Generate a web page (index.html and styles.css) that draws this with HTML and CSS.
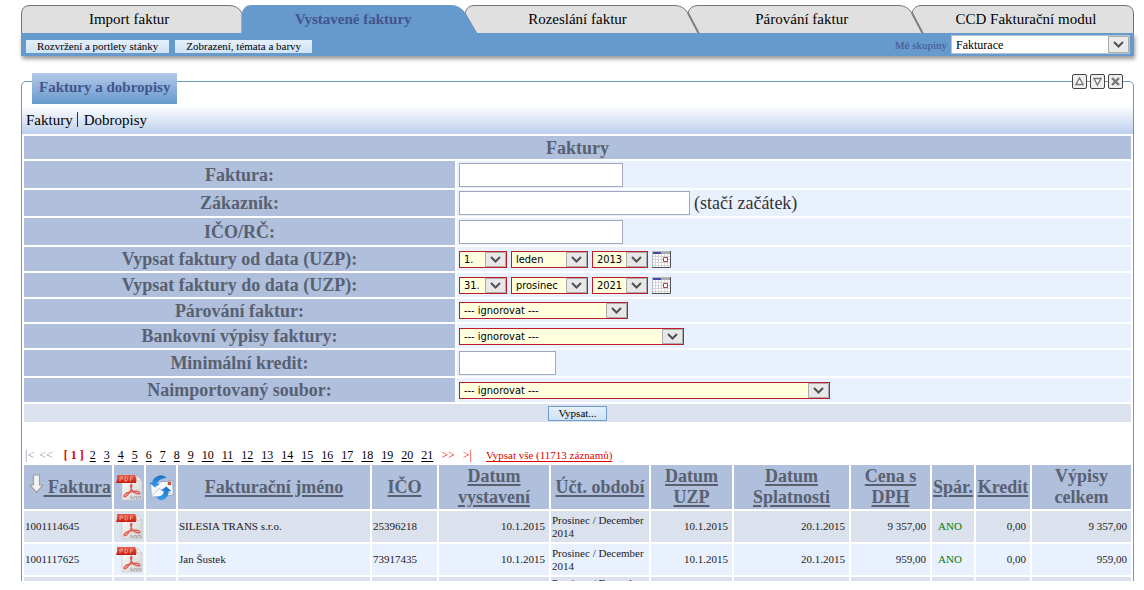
FILE: index.html
```html
<!DOCTYPE html>
<html lang="cs">
<head>
<meta charset="utf-8">
<title>Fakturace – vystavené faktury</title>
<link rel="stylesheet" href="styles.css">
</head>
<body>
<svg class="defs" aria-hidden="true">
  <defs>
    <linearGradient id="g-red" x1="0" y1="0" x2="0" y2="1"><stop offset="0" stop-color="#e8604c"/><stop offset="1" stop-color="#c81c10"/></linearGradient>
    <linearGradient id="g-page" x1="0" y1="0" x2="1" y2="1"><stop offset="0" stop-color="#ffffff"/><stop offset="1" stop-color="#cfcfcf"/></linearGradient>
    <linearGradient id="g-blue" x1="0" y1="0" x2="0" y2="1"><stop offset="0" stop-color="#1d6fc4"/><stop offset="1" stop-color="#35a0ec"/></linearGradient>
  </defs>
  <symbol id="pdf" viewBox="0 0 27 27">
    <path d="M6 2H21L26 7V26H6Z" fill="url(#g-page)" stroke="#c4c4c4" stroke-width=".6"/>
    <path d="M21 2V7H26Z" fill="#f6f6f6" stroke="#bbbbbb" stroke-width=".6"/>
    <path d="M1 1H19Q21 4 20 9H0Q2 5 1 1Z" fill="url(#g-red)"/>
    <path d="M4 7V3H6.500V5H4M9 3V7H10.500L12 5L10.500 3ZM14.500 7V3H17M14.500 5H16.500" fill="none" stroke="#f09a8c"/>
    <path d="M15 10Q14 14 17 17.500Q20 20.500 24 19.500M15.500 10Q17 15 11.500 21Q8.500 24 8 22Q9 18.500 17 17.500Q24 16.500 24 19.500" fill="none" stroke="#dc5a50" stroke-width="1.300"/>
    <path d="M15 25V21.500M15 23H17V25M18.500 25V22.500H20.500V25M22 25V22.500H24.500V25" fill="none" stroke="#a2a2a2" stroke-width=".8"/>
  </symbol>
  <symbol id="mail" viewBox="0 0 27 28">
    <path d="M2 9L25 7L26 22L3 24Z" fill="#f5f8fc" stroke="#8f9fba" stroke-width=".9"/>
    <path d="M3 23L11 15L16 17L25 21" fill="none" stroke="#b4c0d2"/>
    <path d="M20 8H23.500V11.500H20Z" fill="#c8552f"/>
    <path d="M19 4Q14 -1 8 3Q4 5 4 9L1 9L6.500 14L12 10L9 9.500Q11 5 19 4Z" fill="url(#g-blue)"/>
    <path d="M8 24Q12 29 17 26Q21 23 21 18L24 18L18.500 13L13 17L16 18Q15 24 8 24Z" fill="url(#g-blue)"/>
  </symbol>
  <symbol id="calendar" viewBox="0 0 19 17">
    <path d="M0 0H19V17H0Z" fill="#ffffff"/>
    <path d="M0 5.500H18M0 8.500H18M0 11.500H18M0 14.500H18M3.500 3V16M6.500 3V16M9.500 3V16M12.500 3V16M15.500 3V16" stroke="#d5d5d5"/>
    <path d="M0 .5H18M.5 0V16" stroke="#b8b8b8"/>
    <path d="M1 1H9V3H1Z" fill="#4448a8"/>
    <path d="M9 1H18V3H9Z" fill="#a8a8b0"/>
    <path d="M18.500 0V16.500H0" fill="none" stroke="#505058"/>
    <path d="M11.500 6.500H15.500V10.500H11.500Z" fill="#fff" stroke="#b43c3c"/>
  </symbol>
</svg>

<div class="page">
  <header class="top">
    <nav class="tabs">
      <svg class="tab-shapes" viewBox="0 0 1113 28" preserveAspectRatio="none" aria-hidden="true">
        <g fill="#e0e0e0" stroke="#747474">
          <path d="M891 8Q893 .5 900 .5H1104Q1112.500 .5 1112.500 9V29H902Z"/>
          <path d="M667 8Q669 .5 677 .5H878Q886 .5 891 8L902 29H678Z"/>
          <path d="M444 8Q446 .5 453 .5H654Q662 .5 667 8L678 29H456Z"/>
          <path d="M.5 29V9Q.5 .5 9 .5H208Q217 .5 221 8V29Z"/>
        </g>
        <path d="M667 8L678 29M891 8L902 29" stroke="#808080" stroke-width="2" fill="none"/>
        <path d="M221 28V8Q223 0 230 0H430Q439 0 444 8L456 28Z" fill="#6699cc"/>
      </svg>
      <a class="tab" href="#">Import faktur</a>
      <a class="tab tab-active" href="#">Vystavené faktury</a>
      <a class="tab" href="#">Rozeslání faktur</a>
      <a class="tab" href="#">Párování faktur</a>
      <a class="tab" href="#">CCD Fakturační modul</a>
    </nav>
    <div class="toolbar">
      <button class="tool" type="button">Rozvržení a portlety stánky</button>
      <button class="tool" type="button">Zobrazení, témata a barvy</button>
      <label class="group-label" for="group">Mé skupiny</label>
      <select class="group" id="group"><option>Fakturace</option></select>
    </div>
  </header>

  <main class="portlet">
    <div class="portlet-head">
      <h1 class="portlet-title">Faktury a dobropisy</h1>
      <div class="window-buttons">
        <button class="window-button" type="button" aria-label="Nahoru"><svg viewBox="0 0 15 15"><rect x=".5" y=".5" width="14" height="14" rx="1.500" fill="#efefef" stroke="#444"/><path d="M7.500 4L11 10.500H4Z" fill="#fff" stroke="#777" stroke-width="1.400"/></svg></button>
        <button class="window-button" type="button" aria-label="Dolů"><svg viewBox="0 0 15 15"><rect x=".5" y=".5" width="14" height="14" rx="1.500" fill="#efefef" stroke="#444"/><path d="M7.500 11L11 4.500H4Z" fill="#fff" stroke="#777" stroke-width="1.400"/></svg></button>
        <button class="window-button" type="button" aria-label="Zavřít"><svg viewBox="0 0 15 15"><rect x=".5" y=".5" width="14" height="14" rx="1.500" fill="#efefef" stroke="#444"/><path d="M4 4L11 11M11 4L4 11" stroke="#777" stroke-width="2.400"/></svg></button>
      </div>
    </div>
    <nav class="subnav">
      <a href="#">Faktury</a>
      <a href="#">Dobropisy</a>
    </nav>

    <form>
      <table class="filter">
        <colgroup><col class="filter-label"><col></colgroup>
        <tr><th colspan="2">Faktury</th></tr>
        <tr class="tall"><th><label for="invoice">Faktura:</label></th><td><div class="field"><input class="w-m" id="invoice" type="text"></div></td></tr>
        <tr class="mid"><th><label for="customer">Zákazník:</label></th><td><div class="field"><input class="w-l" id="customer" type="text"> (stačí začátek)</div></td></tr>
        <tr class="tall"><th><label for="ico">IČO/RČ:</label></th><td><div class="field"><input class="w-m" id="ico" type="text"></div></td></tr>
        <tr class="date"><th><label for="from-day">Vypsat faktury od data (UZP):</label></th><td><div class="field">
          <select class="pick w-day" id="from-day"><option>1.</option></select>
          <select class="pick w-month" aria-label="Měsíc od"><option>leden</option></select>
          <select class="pick w-year" aria-label="Rok od"><option>2013</option></select>
          <button class="calendar" type="button" aria-label="Kalendář od"><svg><use href="#calendar"/></svg></button></div></td></tr>
        <tr class="date"><th><label for="to-day">Vypsat faktury do data (UZP):</label></th><td><div class="field">
          <select class="pick w-day" id="to-day"><option>31.</option></select>
          <select class="pick w-month" aria-label="Měsíc do"><option>prosinec</option></select>
          <select class="pick w-year" aria-label="Rok do"><option>2021</option></select>
          <button class="calendar" type="button" aria-label="Kalendář do"><svg><use href="#calendar"/></svg></button></div></td></tr>
        <tr><th><label for="pairing">Párování faktur:</label></th><td><div class="field"><select class="pick w-pair" id="pairing"><option>--- ignorovat ---</option></select></div></td></tr>
        <tr class="date"><th><label for="bank">Bankovní výpisy faktury:</label></th><td><div class="field"><select class="pick w-bank" id="bank"><option>--- ignorovat ---</option></select></div></td></tr>
        <tr class="mid"><th><label for="credit">Minimální kredit:</label></th><td><div class="field"><input class="w-s" id="credit" type="text"></div></td></tr>
        <tr class="date"><th><label for="file">Naimportovaný soubor:</label></th><td><div class="field"><select class="pick w-file" id="file"><option>--- ignorovat ---</option></select></div></td></tr>
        <tr class="submit-row"><td colspan="2"><button class="submit" type="submit">Vypsat...</button></td></tr>
      </table>
    </form>

    <nav class="pager">
      <span class="off">|&lt;</span><span class="off prev">&lt;&lt;</span><b>[ 1 ]</b>
      <a href="#">2</a><a href="#">3</a><a href="#">4</a><a href="#">5</a><a href="#">6</a><a href="#">7</a><a href="#">8</a><a href="#">9</a><a href="#">10</a><a href="#">11</a><a href="#">12</a><a href="#">13</a><a href="#">14</a><a href="#">15</a><a href="#">16</a><a href="#">17</a><a href="#">18</a><a href="#">19</a><a href="#">20</a><a href="#">21</a>
      <a class="step" href="#">&gt;&gt;</a><a class="step" href="#">&gt;|</a><a class="all" href="#">Vypsat vše (11713 záznamů)</a>
    </nav>

    <table class="list">
      <colgroup><col class="c-no"><col class="c-icon"><col class="c-icon"><col><col class="c-ico"><col class="c-issued"><col class="c-period"><col class="c-uzp"><col class="c-due"><col class="c-price"><col class="c-pair"><col class="c-credit"><col class="c-total"></colgroup>
      <thead>
        <tr>
          <th><a class="sorted" href="#"><svg class="sort-arrow" viewBox="0 0 15 20" aria-hidden="true"><path d="M4.500 1H10.500V11H14L7.500 18.500L1 11H4.500Z" fill="#f4f4f4" stroke="#a0a0a0" stroke-width="1.200"/></svg><span>&nbsp;Faktura</span></a></th>
          <th><svg class="icon"><use href="#pdf"/></svg></th>
          <th><svg class="icon"><use href="#mail"/></svg></th>
          <th><a href="#">Fakturační jméno</a></th>
          <th><a href="#">IČO</a></th>
          <th><a href="#">Datum vystavení</a></th>
          <th><a href="#">Účt. období</a></th>
          <th><a href="#">Datum UZP</a></th>
          <th><a href="#">Datum Splatnosti</a></th>
          <th><a href="#">Cena s DPH</a></th>
          <th><a href="#">Spár.</a></th>
          <th><a href="#">Kredit</a></th>
          <th>Výpisy celkem</th>
        </tr>
      </thead>
      <tbody>
        <tr><td>1001114645</td><td><a href="#" aria-label="PDF"><svg class="icon"><use href="#pdf"/></svg></a></td><td></td><td>SILESIA TRANS s.r.o.</td><td>25396218</td><td class="num">10.1.2015</td><td>Prosinec / December 2014</td><td class="num">10.1.2015</td><td class="num">20.1.2015</td><td class="num">9 357,00</td><td class="yes">ANO</td><td class="num">0,00</td><td class="num">9 357,00</td></tr>
        <tr><td>1001117625</td><td><a href="#" aria-label="PDF"><svg class="icon"><use href="#pdf"/></svg></a></td><td></td><td>Jan Šustek</td><td>73917435</td><td class="num">10.1.2015</td><td>Prosinec / December 2014</td><td class="num">10.1.2015</td><td class="num">20.1.2015</td><td class="num">959,00</td><td class="yes">ANO</td><td class="num">0,00</td><td class="num">959,00</td></tr>
        <tr class="compact"><td></td><td></td><td></td><td></td><td></td><td></td><td>Prosinec / December 2014</td><td></td><td></td><td></td><td></td><td></td><td></td></tr>
      </tbody>
    </table>
  </main>
</div>
</body>
</html>
```
FILE: styles.css
```css
* { box-sizing: border-box; }

body {
  margin: 0;
  background: #fff;
  color: #333;
  font-family: "Liberation Serif", "Times New Roman", serif;
  font-size: 15px;
}

button, input, select { margin: 0; font-family: inherit; }
.defs { position: absolute; width: 0; height: 0; }

.page {
  height: calc(100vh - 9px);
  overflow: hidden;
  padding: 5px 10px 0 21px;
}

/* Top tabs and toolbar */
.tabs {
  position: relative;
  display: flex;
  height: 28px;
}
.tab-shapes {
  position: absolute;
  inset: 0;
  width: 100%;
  height: 100%;
}
.tab {
  position: relative;
  flex: 1;
  color: #000;
  line-height: 28px;
  text-align: center;
  text-decoration: none;
}
.tab:nth-of-type(1) { padding-right: 8px; }
.tab:nth-of-type(2) { padding-right: 8px; }
.tab:nth-of-type(4) { padding-left: 8px; }
.tab:nth-of-type(5) { padding-left: 8px; }
.tab-active { color: #44548c; font-weight: bold; }

.toolbar {
  display: flex;
  align-items: center;
  gap: 6px;
  height: 23px;
  padding: 0 4px 0 5px;
  background: #6699cc;
  box-shadow: 1px 3px 4px #999;
}
.tool {
  height: 13px;
  margin-top: 4px;
  padding: 0 11px;
  border: 0;
  background: linear-gradient(#e4effb, #cfe2f6);
  color: #000;
  font-size: 11px;
  line-height: 13px;
}
.group-label { margin-left: auto; color: #44548c; font-size: 11px; }
.group {
  width: 179px;
  height: 19px;
  margin-left: -2px;
  padding: 0 0 0 4px;
  border: 1px solid #b4c4d8;
  border-radius: 0;
  appearance: none;
  color: #000;
  font-size: 12px;
  background: #fff url("data:image/svg+xml,%3Csvg xmlns='http://www.w3.org/2000/svg' width='21' height='17'%3E%3Cpath d='M.5 .5H20.5V16.500H.5Z' fill='%23eaeaea' stroke='%23acacac'/%3E%3Cpath d='M6 6L10.500 10.500L15 6' fill='none' stroke='%23505050' stroke-width='2'/%3E%3C/svg%3E") right center no-repeat;
}

/* Portlet frame */
.portlet {
  min-height: 100vh;
  margin-top: 25px;
  border: 1px solid #6699bb;
  border-radius: 5px 5px 0 0;
}
.portlet-head {
  display: flex;
  justify-content: space-between;
  height: 23px;
  padding: 0 10px;
}
.portlet-title {
  height: 31px;
  margin: -9px 0 0;
  padding: 0 7px;
  background: linear-gradient(#b5c9e9, #6699cc);
  color: #44548c;
  font-size: 15px;
  line-height: 29px;
}
.window-buttons { display: flex; gap: 3px; height: 15px; margin-top: -8px; }
.window-button { width: 15px; height: 15px; padding: 0; border: 0; background: #fff; }
.window-button svg { display: block; width: 15px; height: 15px; }

.subnav {
  display: flex;
  height: 29px;
  padding: 7px 4px;
  background: linear-gradient(#fff, #bccfed);
}
.subnav a { color: #000; line-height: 16px; text-decoration: none; }
.subnav a + a { margin-left: 4px; padding-left: 6px; border-left: 1px solid #333; }

/* Filter form */
table { width: 100%; border-spacing: 2px; table-layout: fixed; }
th { padding: 0; background: #afbfdc; color: #596171; font-size: 18px; }
.filter th { height: 23px; line-height: 20px; }
.filter td { height: 23px; padding: 0 2px; background: #e9f1ff; }
.filter .tall th, .filter .tall td { height: 27px; }
.filter .mid th, .filter .mid td { height: 26px; }
.filter .date th, .filter .date td { height: 24px; }
.filter-label { width: 39%; }
.field { display: flex; align-items: center; gap: 4px; font-size: 18px; line-height: 20px; }
input { height: 24px; padding: 0 3px; border: 1px solid #a3a9bb; background: #fff; font-size: 15px; }

.pick {
  height: 17px;
  padding: 0 0 0 4px;
  border: 1px solid #c01c28;
  border-radius: 0;
  appearance: none;
  color: #000;
  font-family: "DejaVu Sans Condensed", Tahoma, sans-serif;
  font-size: 11px;
  line-height: 15px;
  background: #ffffde url("data:image/svg+xml,%3Csvg xmlns='http://www.w3.org/2000/svg' width='21' height='15'%3E%3Cpath d='M.5 .5H20.5V14.500H.5Z' fill='%23e8e8e8' stroke='%23acacac'/%3E%3Cpath d='M6 5L10.500 9.500L15 5' fill='none' stroke='%23505050' stroke-width='2'/%3E%3C/svg%3E") right center no-repeat;
}
.w-s { width: 97px; }
.w-m { width: 164px; }
.w-l { width: 231px; }
.w-day { width: 48px; }
.w-month { width: 77px; }
.w-year { width: 56px; }
.w-pair { width: 169px; }
.w-bank { width: 225px; }
.w-file { width: 371px; }
.calendar { width: 19px; height: 17px; padding: 0; border: 0; background: none; }
.calendar svg { display: block; width: 19px; height: 17px; }

.filter .submit-row td { height: 18px; background: #dbe1ed; text-align: center; font-size: 0; }
.submit {
  width: 59px;
  height: 15px;
  padding: 0;
  border: 1px solid #6f9bce;
  background: linear-gradient(#e4effb, #cfe2f6);
  color: #000;
  font-size: 11px;
  line-height: 13px;
}

/* Pager */
.pager {
  display: flex;
  align-items: center;
  gap: 8px;
  margin-top: 24px;
  padding: 0 3px;
  font-size: 12px;
  line-height: 15px;
}
.pager a { color: #000; text-underline-offset: 2px; }
.pager b { margin-right: -2px; color: #e00000; }
.pager .off { margin-right: -3px; color: #888; }
.pager .prev { margin-right: 3px; }
.pager .step { color: #e00000; font-size: 12px; text-decoration: none; }
.pager .all { margin-left: 6px; color: #e00000; font-size: 11px; }

/* Invoice list */
.list th { height: 44px; line-height: 21px; }
.list th a { color: inherit; text-decoration-thickness: 2px; text-underline-offset: 2px; }
.list .sorted { display: flex; align-items: center; justify-content: flex-end; padding-right: 1px; text-decoration: none; }
.sorted span { text-decoration: underline; text-decoration-thickness: 2px; text-underline-offset: 2px; }
.sort-arrow { width: 15px; height: 20px; margin-bottom: 6px; }
.list td { height: 31px; padding: 0 1px; background: #e9f1ff; color: #222; font-size: 11px; line-height: 13px; }
.list tbody tr:nth-child(odd) td { background: #dbe1ed; }
.list .compact td { height: 26px; }
.list .num { padding-right: 4px; text-align: right; }
.list .yes { padding-left: 6px; color: #008000; }
.icon { display: block; width: 27px; height: 27px; margin: 0 auto; }

.c-no { width: 88px; }
.c-icon { width: 30px; }
.c-ico { width: 65px; }
.c-issued { width: 110px; }
.c-period { width: 98px; }
.c-uzp { width: 81px; }
.c-due { width: 115px; }
.c-price { width: 79px; }
.c-pair { width: 42px; }
.c-credit { width: 54px; }
.c-total { width: 99px; }
```
